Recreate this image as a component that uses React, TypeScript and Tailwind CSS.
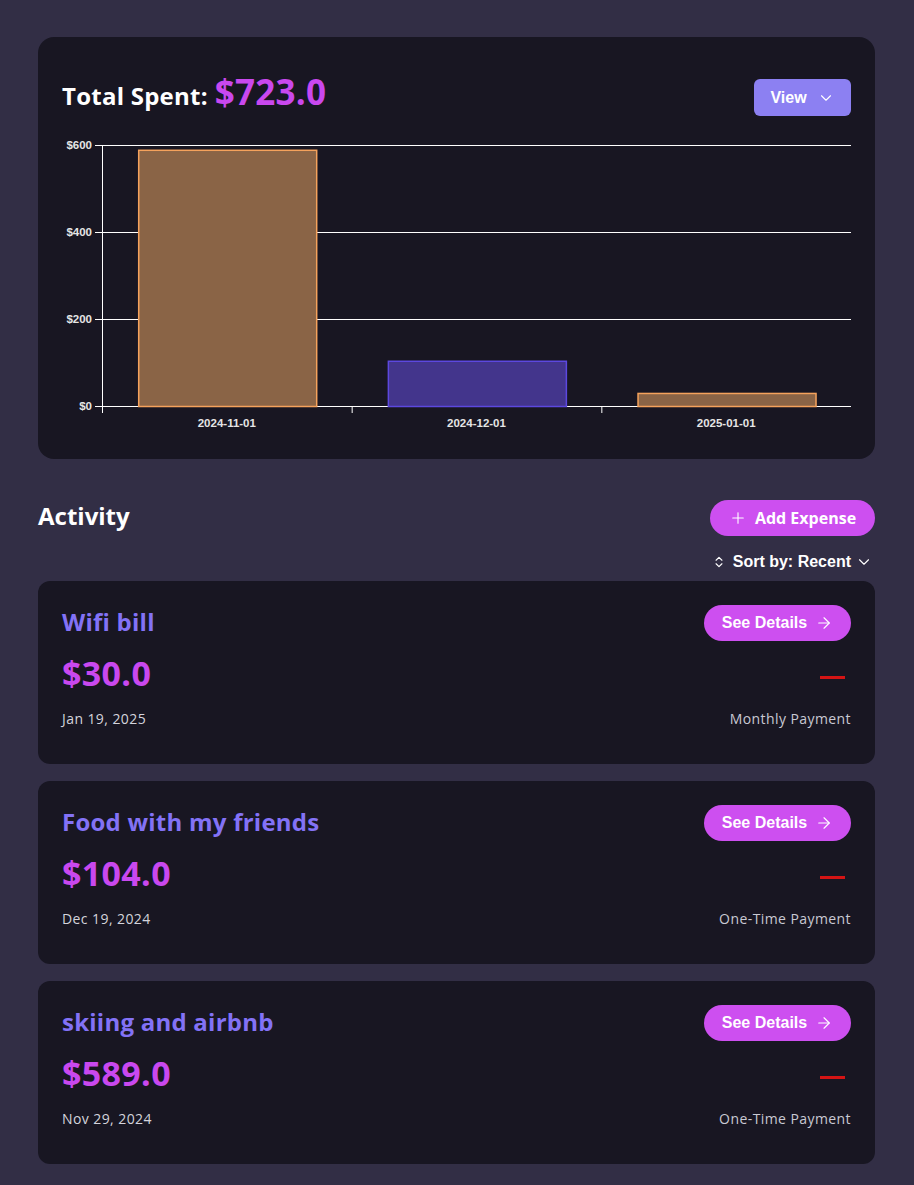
import React from 'react';
import { ArrowRight, ChevronDown, ChevronsUpDown, Plus } from 'lucide-react';

const EXPENSES = [
  { title: 'Wifi bill', amount: '$30.0', date: 'Jan 19, 2025', type: 'Monthly Payment' },
  { title: 'Food with my friends', amount: '$104.0', date: 'Dec 19, 2024', type: 'One-Time Payment' },
  { title: 'skiing and airbnb', amount: '$589.0', date: 'Nov 29, 2024', type: 'One-Time Payment' },
];

const BARS = [
  { label: '2024-11-01', value: 589, fill: '#8a6446', stroke: '#f5a25c' },
  { label: '2024-12-01', value: 104, fill: '#43358c', stroke: '#5c48df' },
  { label: '2025-01-01', value: 30, fill: '#8a6446', stroke: '#f5a25c' },
];

const SpendChart: React.FC = () => {
  const axisX = 40;
  const right = 789;
  const top = 9;
  const bottom = 270;
  const band = (right - axisX) / BARS.length;
  const yFor = (v: number) => bottom - (v / 600) * (bottom - top);

  return (
    <svg width={789} height={299} className="block" style={{ fontFamily: '"Liberation Sans", Arial, sans-serif' }}>
      {[0, 200, 400, 600].map((v) => (
        <g key={v}>
          <line x1={axisX - 7} x2={right} y1={yFor(v) + 0.5} y2={yFor(v) + 0.5} stroke="#ffffff" strokeWidth={1} />
          <text x={30} y={yFor(v) + 4} textAnchor="end" fontSize={11.5} fontWeight={700} fill="#e5e5e5">
            ${v}
          </text>
        </g>
      ))}
      {BARS.map((b, i) => {
        const x = axisX + i * band + band * 0.145;
        const y = yFor(b.value);
        return (
          <rect key={b.label} x={x + 0.5} y={y + 0.5} width={178} height={bottom - y} fill={b.fill} stroke={b.stroke} strokeWidth={1.5} />
        );
      })}
      {/* x ticks below the axis */}
      {[0, 1, 2, 3].map((i) => (
        <line key={i} x1={axisX + i * band + 0.5} x2={axisX + i * band + 0.5} y1={bottom} y2={bottom + 7} stroke="#ffffff" strokeWidth={1} />
      ))}
      <line x1={axisX + 0.5} x2={axisX + 0.5} y1={top} y2={bottom} stroke="#ffffff" strokeWidth={1} />
      {BARS.map((b, i) => (
        <text key={b.label} x={axisX + i * band + band / 2} y={291} textAnchor="middle" fontSize={11.5} fontWeight={700} fill="#e5e5e5">
          {b.label}
        </text>
      ))}
    </svg>
  );
};

const ExpenseCard: React.FC<(typeof EXPENSES)[number]> = ({ title, amount, date, type }) => (
  <div className="bg-[#181622] rounded-xl px-6 pt-6 pb-[35px]">
    <div className="flex justify-between items-center h-9">
      <h3 className="text-2xl font-bold text-[#8372f6] tracking-[0.01em] -mt-[3px]">{title}</h3>
      <button className="h-9 w-[147px] rounded-full bg-[#cd4ff0] text-white font-bold text-base flex items-center justify-center gap-2 font-['Liberation_Sans',Arial,sans-serif]">
        <span>See Details</span>
        <ArrowRight className="w-[18px] h-[18px]" strokeWidth={1.5} />
      </button>
    </div>
    <div className="flex justify-between items-center h-9 mt-[14px]">
      <div className="text-[34px] font-bold text-[#c948ef] tracking-[0.01em]">{amount}</div>
      <div className="w-[25px] h-[3px] bg-[#d41414] mr-[6px] mt-2"></div>
    </div>
    <div className="flex justify-between items-center h-5 mt-[18px] text-sm text-[#d4d4dc] tracking-[0.03em]">
      <span>{date}</span>
      <span className="text-[#c9c9d3]">{type}</span>
    </div>
  </div>
);

export default function App() {
  return (
    <div className="min-h-[1185px] bg-[#322e45] pl-[38px] pr-[39px] pt-[37px] pb-6 font-['Open_Sans',sans-serif]">
      <section className="bg-[#181622] rounded-2xl px-6 pt-6 pb-6">
        <div className="flex justify-between items-start h-[75px]">
          <h1 className="flex items-baseline gap-[7px] text-white font-bold leading-none mt-[13px] tracking-[0.015em]">
            <span className="text-2xl leading-none">Total Spent:</span>
            <span className="text-[35px] leading-none text-[#c948ef]">$723.0</span>
          </h1>
          <button className="h-[37px] w-[97px] mt-[18px] rounded-md bg-[#8c80f2] text-white font-bold text-base flex items-center justify-center gap-[10px] font-['Liberation_Sans',Arial,sans-serif]">
            <span>View</span>
            <ChevronDown className="w-[18px] h-[18px]" strokeWidth={1.5} />
          </button>
        </div>
        <SpendChart />
      </section>

      <div className="mt-[41px] flex justify-between items-center h-9">
        <h2 className="text-2xl font-bold text-white -mt-1">Activity</h2>
        <button className="h-9 w-[165px] rounded-full bg-[#cd4ff0] text-white font-bold text-base flex items-center justify-center gap-2">
          <Plus className="w-[18px] h-[18px]" strokeWidth={1.5} />
          <span>Add Expense</span>
        </button>
      </div>
      <div className="flex justify-end items-center h-[22px] mt-[15px] mb-[8px] text-white font-bold text-base font-['Liberation_Sans',Arial,sans-serif]">
        <ChevronsUpDown className="w-[14px] h-[14px] mr-[7px]" strokeWidth={2} />
        <span>Sort by: Recent</span>
        <ChevronDown className="w-[18px] h-[18px] ml-[4px] mr-[2px]" strokeWidth={1.5} />
      </div>

      <div className="flex flex-col gap-[17px]">
        {EXPENSES.map((e) => (
          <ExpenseCard key={e.title} {...e} />
        ))}
      </div>
    </div>
  );
}
